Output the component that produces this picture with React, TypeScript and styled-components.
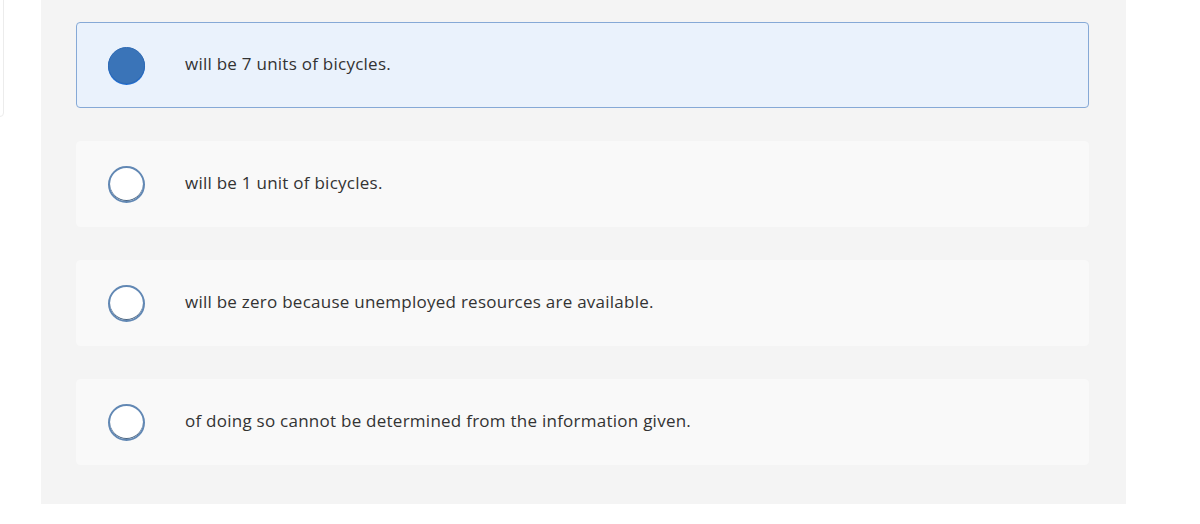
import React, { useState } from 'react';
import styled, { createGlobalStyle } from 'styled-components';

const GlobalStyle = createGlobalStyle`
  html, body {
    margin: 0;
    padding: 0;
    background: #ffffff;
  }
  body {
    font-family: "Open Sans", Lato, "Liberation Sans", sans-serif;
    color: #333;
  }
`;

const Page = styled.div`
  position: relative;
  width: 1200px;
  height: 524px;
  overflow: hidden;
`;

const SideTab = styled.div`
  position: absolute;
  left: -10px;
  top: -10px;
  width: 12px;
  height: 125px;
  background: #fff;
  border: 1px solid #ececec;
  border-radius: 4px;
`;

const Panel = styled.div`
  margin-left: 41px;
  width: 1085px;
  height: 504px;
  background: #f4f4f4;
  box-sizing: border-box;
  padding: 22px 0 0 35px;
  display: flex;
  flex-direction: column;
  gap: 33px;
`;

const Option = styled.label<{ $selected: boolean }>`
  display: flex;
  align-items: center;
  width: 1013px;
  height: 86px;
  box-sizing: border-box;
  padding-left: 31px;
  border-radius: 4px;
  cursor: pointer;
  background: ${p => (p.$selected ? '#eaf2fc' : '#f9f9f9')};
  border: 1px solid ${p => (p.$selected ? '#86a9d6' : '#f9f9f9')};
`;

const Radio = styled.span<{ $selected: boolean }>`
  flex: none;
  width: 37px;
  height: 37px;
  box-sizing: border-box;
  border-radius: 50%;
  background: ${p => (p.$selected ? '#3a74b8' : '#ffffff')};
  border: ${p => (p.$selected ? '1px solid #2f6ab3' : '2px solid #6288b4')};
  box-shadow: ${p =>
    p.$selected ? '0 1px 0 #1f6fd6' : 'inset 0 -1px 0 #4a6480'};
`;

const Label = styled.span`
  margin-left: 40px;
  margin-top: -3px;
  font-size: 17px;
  letter-spacing: 0.25px;
  color: #333;
`;

const options = [
  'will be 7 units of bicycles.',
  'will be 1 unit of bicycles.',
  'will be zero because unemployed resources are available.',
  'of doing so cannot be determined from the information given.',
];

export default function App() {
  const [selected, setSelected] = useState(0);
  return (
    <Page>
      <GlobalStyle />
      <SideTab />
      <Panel>
        {options.map((text, i) => (
          <Option key={i} $selected={selected === i} onClick={() => setSelected(i)}>
            <Radio $selected={selected === i} />
            <Label>{text}</Label>
          </Option>
        ))}
      </Panel>
    </Page>
  );
}
